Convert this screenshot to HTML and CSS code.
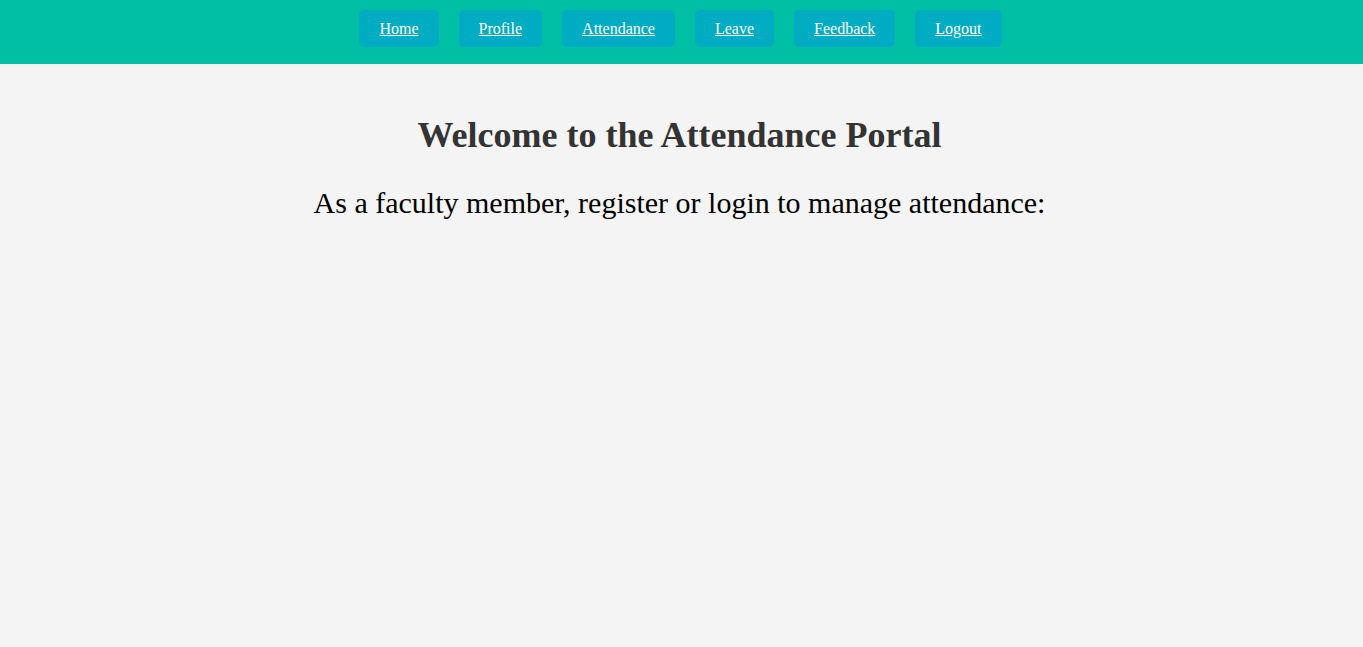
FILE: index.html
```html
<!DOCTYPE html>
<html>
<head>
<meta charset="utf-8">
<link rel="stylesheet" href="styles.css">
</head>
<body>
<nav class="topnav">
  <a href="#" class="nav-link">Home</a>
  <a href="#" class="nav-link">Profile</a>
  <a href="#" class="nav-link">Attendance</a>
  <a href="#" class="nav-link">Leave</a>
  <a href="#" class="nav-link">Feedback</a>
  <a href="#" class="nav-link">Logout</a>
</nav>
<main class="content">
  <h1 class="title">Welcome to the Attendance Portal</h1>
  <p class="lead">As a faculty member, register or login to manage attendance:</p>
</main>
</body>
</html>
```

FILE: styles.css
```css
html, body {
  margin: 0;
  padding: 0;
}
body {
  background: #f4f4f4;
  font-family: "Liberation Serif", "Times New Roman", serif;
  color: #000;
}
.topnav {
  box-sizing: border-box;
  height: 64px;
  background: #00bfa5;
  display: flex;
  justify-content: center;
  align-items: flex-start;
  gap: 20px;
  padding-top: 10px;
  padding-right: 2px;
}
.nav-link {
  display: block;
  background: #00acc1;
  color: #fff;
  font-size: 16px;
  line-height: 17px;
  padding: 10px 20px;
  border-radius: 5px;
  text-decoration: underline;
}
.content {
  text-align: center;
  padding: 20px 22px 20px 18px;
}
.title {
  font-size: 36px;
  color: #333;
  margin: 30px 0 0;
}
.lead {
  font-size: 30px;
  margin: 30px 0 0;
}
```
